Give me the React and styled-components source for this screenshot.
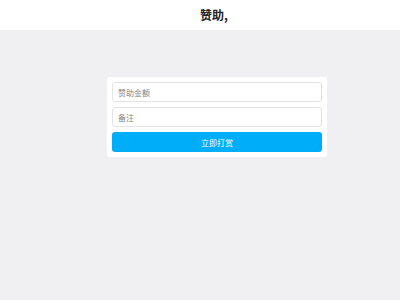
import React from 'react'
import styled, { createGlobalStyle } from 'styled-components'

const GlobalStyle = createGlobalStyle`
  html, body {
    margin: 0;
    padding: 0;
    background: #f0f0f3;
    font-family: "Noto Sans CJK SC", "Liberation Sans", sans-serif;
  }
  #root {
    min-height: 300px;
  }
`

const App = () => {
  return (
    <>
      <GlobalStyle />
      <Header>
        <Title>赞助,</Title>
      </Header>
      <Card>
        <Field placeholder="赞助金额" />
        <Field placeholder="备注" />
        <SubmitButton>立即打赏</SubmitButton>
      </Card>
    </>
  )
}

export default App

// Styled components

const Header = styled.header`
  height: 30px;
  background: #fff;
  display: flex;
  align-items: center;
  padding-left: 200px;
  box-sizing: border-box;
`

const Title = styled.h1`
  margin: 0;
  font-size: 12px;
  font-weight: bold;
  color: #222;
  line-height: 30px;
`

const Card = styled.div`
  width: 220px;
  margin: 47px 0 0 107px;
  padding: 5px;
  box-sizing: border-box;
  background: #fff;
  border-radius: 2px;
  display: flex;
  flex-direction: column;
  gap: 5px;
`

const Field = styled.input`
  height: 20px;
  box-sizing: border-box;
  border: 1px solid #e3e3e3;
  border-radius: 3px;
  padding: 0 5px;
  font-size: 8px;
  font-family: inherit;
  color: #333;
  outline: none;

  &::placeholder {
    color: #888;
  }
`

const SubmitButton = styled.button`
  height: 20px;
  border: 0;
  border-radius: 3px;
  background: #00adf9;
  color: #fff;
  font-size: 8px;
  font-family: inherit;
  cursor: pointer;
`
